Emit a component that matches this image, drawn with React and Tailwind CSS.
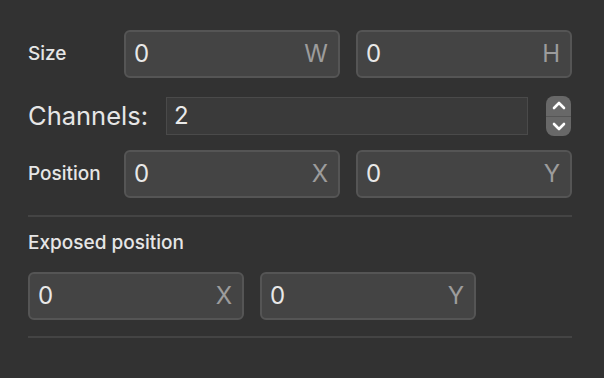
const font = { fontFamily: "Inter, 'Noto Sans', sans-serif" };

function Field({ value, suffix }) {
  return (
    <div className="flex h-[48px] w-[216px] items-center justify-between rounded-[6px] border-2 border-[#555555] bg-[#444444] pl-[8px] pr-[10px]">
      <span className="text-[24px] leading-none text-[#e8e8e8]">{value}</span>
      <span className="text-[24px] leading-none text-[#9c9c9c]">{suffix}</span>
    </div>
  );
}

function Stepper() {
  return (
    <div className="flex h-[40px] w-[25px] flex-col overflow-hidden rounded-[8px] bg-[#686868]">
      <div className="flex flex-1 items-center justify-center border-b border-[#555555]">
        <svg width="14" height="9" viewBox="0 0 14 9" fill="none">
          <path d="M2 7 L7 2 L12 7" stroke="#ffffff" strokeWidth="2.6" strokeLinecap="round" strokeLinejoin="round" />
        </svg>
      </div>
      <div className="flex flex-1 items-center justify-center">
        <svg width="14" height="9" viewBox="0 0 14 9" fill="none">
          <path d="M2 2 L7 7 L12 2" stroke="#ffffff" strokeWidth="2.6" strokeLinecap="round" strokeLinejoin="round" />
        </svg>
      </div>
    </div>
  );
}

export default function App() {
  return (
    <div className="h-[378px] w-[604px] bg-[#323232] pl-[28px] pr-[32px] pt-[30px]" style={font}>
      {/* Size */}
      <div className="flex items-center">
        <span className="w-[96px] text-[19px] font-medium text-[#e6e6e6]">Size</span>
        <div className="flex gap-[16px]">
          <Field value="0" suffix="W" />
          <Field value="0" suffix="H" />
        </div>
      </div>

      {/* Channels */}
      <div className="mt-[18px] flex items-center">
        <span className="w-[138px] text-[25.5px] leading-none text-[#e6e6e6]">Channels:</span>
        <div className="flex h-[38px] w-[362px] items-center border border-[#4a4a4a] bg-[#3a3a3a] pl-[7px]">
          <span className="text-[24px] leading-none text-[#eaeaea]">2</span>
        </div>
        <div className="ml-[18px]">
          <Stepper />
        </div>
      </div>

      {/* Position */}
      <div className="mt-[14px] flex items-center">
        <span className="w-[96px] text-[19px] font-medium text-[#e6e6e6]">Position</span>
        <div className="flex gap-[16px]">
          <Field value="0" suffix="X" />
          <Field value="0" suffix="Y" />
        </div>
      </div>

      <div className="mt-[17px] h-[2px] w-[544px] bg-[#444444]" />

      <div className="mt-[14px] text-[19px] font-medium leading-[24px] text-[#e6e6e6]">Exposed position</div>

      <div className="mt-[17px] flex gap-[16px]">
        <Field value="0" suffix="X" />
        <Field value="0" suffix="Y" />
      </div>

      <div className="mt-[16px] h-[2px] w-[544px] bg-[#444444]" />
    </div>
  );
}
